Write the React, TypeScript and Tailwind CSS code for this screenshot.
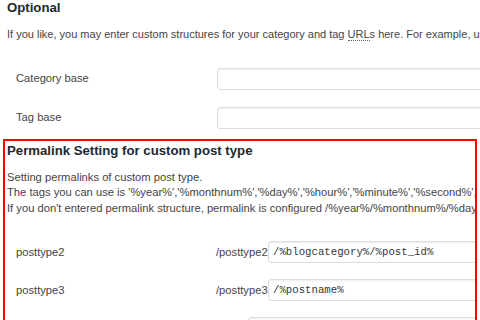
import React from "react";

const font = { fontFamily: '"Liberation Sans", Arial, sans-serif' };

function Field({ value, width = "w-[300px]" }: { value?: string; width?: string }) {
  return (
    <div
      className={`h-[22px] ${width} shrink-0 rounded-[3px] border border-[#dddddd] bg-white shadow-[inset_0_1px_2px_rgba(0,0,0,0.07)] flex items-center pl-[4px] text-[10.7px] text-[#32373c] whitespace-nowrap`}
      style={{ fontFamily: '"Liberation Mono", "DejaVu Sans Mono", monospace' }}
    >
      {value}
    </div>
  );
}

export default function App() {
  return (
    <div className="w-[480px] h-[320px] overflow-hidden bg-white text-[#444444] text-[11.2px]" style={font}>
      <div className="pl-[7px]">
        <h2 className="h-[16px] leading-[16px] text-[13.2px] font-bold text-[#23282d] whitespace-nowrap">Optional</h2>
        <p className="mt-[11px] leading-[15.5px] whitespace-nowrap text-[11px]">
          If you like, you may enter custom structures for your category and tag{" "}
          <abbr className="no-underline border-b border-dotted border-[#666]">URL</abbr>s here. For example, using
        </p>
        <div className="mt-[25px] flex flex-col gap-[17px] pl-[9px]">
          <div className="flex items-center h-[22px]">
            <div className="w-[201px] shrink-0">Category base</div>
            <Field width="w-[320px]" />
          </div>
          <div className="flex items-center h-[22px]">
            <div className="w-[201px] shrink-0">Tag base</div>
            <Field width="w-[320px]" />
          </div>
        </div>
      </div>
      <div className="mt-[10px] ml-[3px] w-[474px] h-[200px] border-2 border-[#ff0000] overflow-hidden">
        <h3 className="pl-[2px] mt-[2px] h-[16px] leading-[16px] text-[13.2px] font-bold text-[#23282d] whitespace-nowrap">
          Permalink Setting for custom post type
        </h3>
        <p className="pl-[2px] mt-[11px] leading-[15.5px] whitespace-nowrap">
          Setting permalinks of custom post type.
          <br />
          The tags you can use is '%year%','%monthnum%','%day%','%hour%','%minute%','%second%','%postname%','%post_id%','%author%'
          <br />
          If you don't entered permalink structure, permalink is configured /%year%/%monthnum%/%day%/%post_id%/.
        </p>
        <div className="mt-[25px] flex flex-col gap-[16px] pl-[11px]">
          <div className="flex items-center h-[22px]">
            <div className="w-[200px] shrink-0">posttype2</div>
            <div className="w-[52px] shrink-0 whitespace-nowrap">/posttype2</div>
            <Field value="/%blogcategory%/%post_id%" width="w-[260px]" />
          </div>
          <div className="flex items-center h-[22px]">
            <div className="w-[200px] shrink-0">posttype3</div>
            <div className="w-[52px] shrink-0 whitespace-nowrap">/posttype3</div>
            <Field value="/%postname%" width="w-[260px]" />
          </div>
          <div className="flex items-center h-[22px]">
            <div className="w-[200px] shrink-0">page</div>
            <div className="w-[32px] shrink-0 whitespace-nowrap">/</div>
            <Field width="w-[280px]" />
          </div>
        </div>
      </div>
    </div>
  );
}
